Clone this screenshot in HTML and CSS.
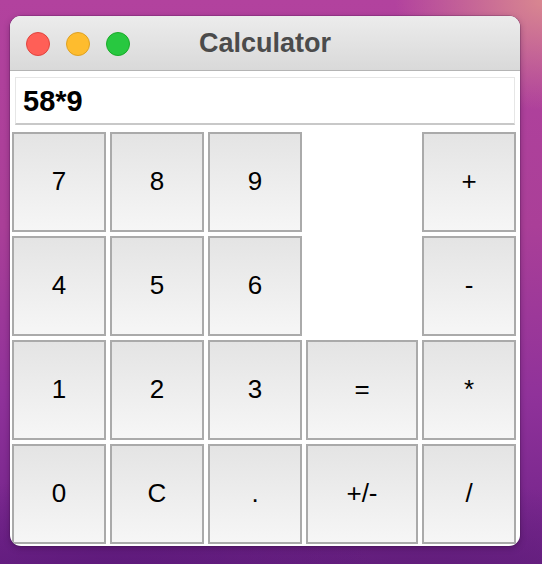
FILE: index.html
```html
<!DOCTYPE html>
<html lang="en">
<head>
<meta charset="utf-8">
<title>Calculator</title>
<link rel="stylesheet" href="styles.css">
</head>
<body>
<div class="window">
  <header class="titlebar">
    <div class="lights">
      <span class="light red"></span>
      <span class="light yellow"></span>
      <span class="light green"></span>
    </div>
    <div class="title">Calculator</div>
    <div></div>
  </header>
  <main class="content">
    <div class="display">58*9</div>
    <div class="keys">
      <button class="key">7</button>
      <button class="key">8</button>
      <button class="key">9</button>
      <div class="blank"></div>
      <button class="key">+</button>
      <button class="key">4</button>
      <button class="key">5</button>
      <button class="key">6</button>
      <div class="blank"></div>
      <button class="key">-</button>
      <button class="key">1</button>
      <button class="key">2</button>
      <button class="key">3</button>
      <button class="key">=</button>
      <button class="key">*</button>
      <button class="key">0</button>
      <button class="key">C</button>
      <button class="key">.</button>
      <button class="key">+/-</button>
      <button class="key">/</button>
    </div>
  </main>
</div>
</body>
</html>
```

FILE: styles.css
```css
html, body {
  margin: 0;
  height: 100%;
}

body {
  padding: 16px 0 0 10px;
  box-sizing: border-box;
  font-family: "Liberation Sans", Arial, sans-serif;
  background:
    radial-gradient(ellipse 150px 110px at 545px 0px, #d98890 0%, rgba(217,136,144,0) 100%),
    radial-gradient(ellipse 260px 120px at 120px 590px, #5a1878 0%, rgba(90,24,120,0) 100%),
    radial-gradient(ellipse 300px 110px at 420px 590px, #5e1c78 0%, rgba(94,28,120,0) 100%),
    linear-gradient(180deg, #b2429e 0%, #aa3f98 40%, #90329a 70%, #6e2288 100%);
  overflow: hidden;
}

.window {
  width: 510px;
  height: 530px;
  border-radius: 11px;
  overflow: hidden;
  background: #ffffff;
  display: flex;
  flex-direction: column;
  box-shadow: 0 2px 6px rgba(40, 0, 50, 0.35), 0 0 0 0.5px rgba(60, 20, 70, 0.4);
}

.titlebar {
  height: 54px;
  flex: none;
  display: grid;
  grid-template-columns: 1fr auto 1fr;
  align-items: center;
  background: linear-gradient(180deg, #ececec 0%, #d9d9d9 100%);
  border-bottom: 1px solid #b4b4b4;
}

.lights {
  display: flex;
  gap: 16px;
  padding-left: 16px;
  padding-top: 2px;
}

.light {
  width: 24px;
  height: 24px;
  border-radius: 50%;
  box-sizing: border-box;
}

.red { background: #ff5f57; border: 1px solid #e0443e; }
.yellow { background: #febc2e; border: 1px solid #dea123; }
.green { background: #28c840; border: 1px solid #1aab29; }

.title {
  font-size: 27px;
  font-weight: bold;
  color: #4b4b4b;
  padding-top: 1px;
}

.content {
  flex: 1;
  display: flex;
  flex-direction: column;
  padding: 6px 4px 2px 2px;
  gap: 6px;
}

.display {
  margin-left: 3px;
  width: 500px;
  height: 48px;
  box-sizing: border-box;
  border: 1px solid #e6e6e6;
  border-bottom: 2px solid #c8c8c8;
  padding: 5px 0 0 7px;
  font-size: 29px;
  font-weight: bold;
  color: #000;
  line-height: 36px;
}

.keys {
  display: grid;
  grid-template-columns: 94px 94px 94px 112px 94px;
  grid-template-rows: repeat(4, 100px);
  gap: 4px;
  margin-top: 1px;
}

.key {
  margin: 0;
  padding: 0 0 2px;
  border: 2px solid #aaaaaa;
  background: linear-gradient(180deg, #e4e4e4 0%, #f6f6f6 100%);
  font-family: "Liberation Sans", Arial, sans-serif;
  font-size: 26px;
  color: #000;
  display: flex;
  align-items: center;
  justify-content: center;
}
```
